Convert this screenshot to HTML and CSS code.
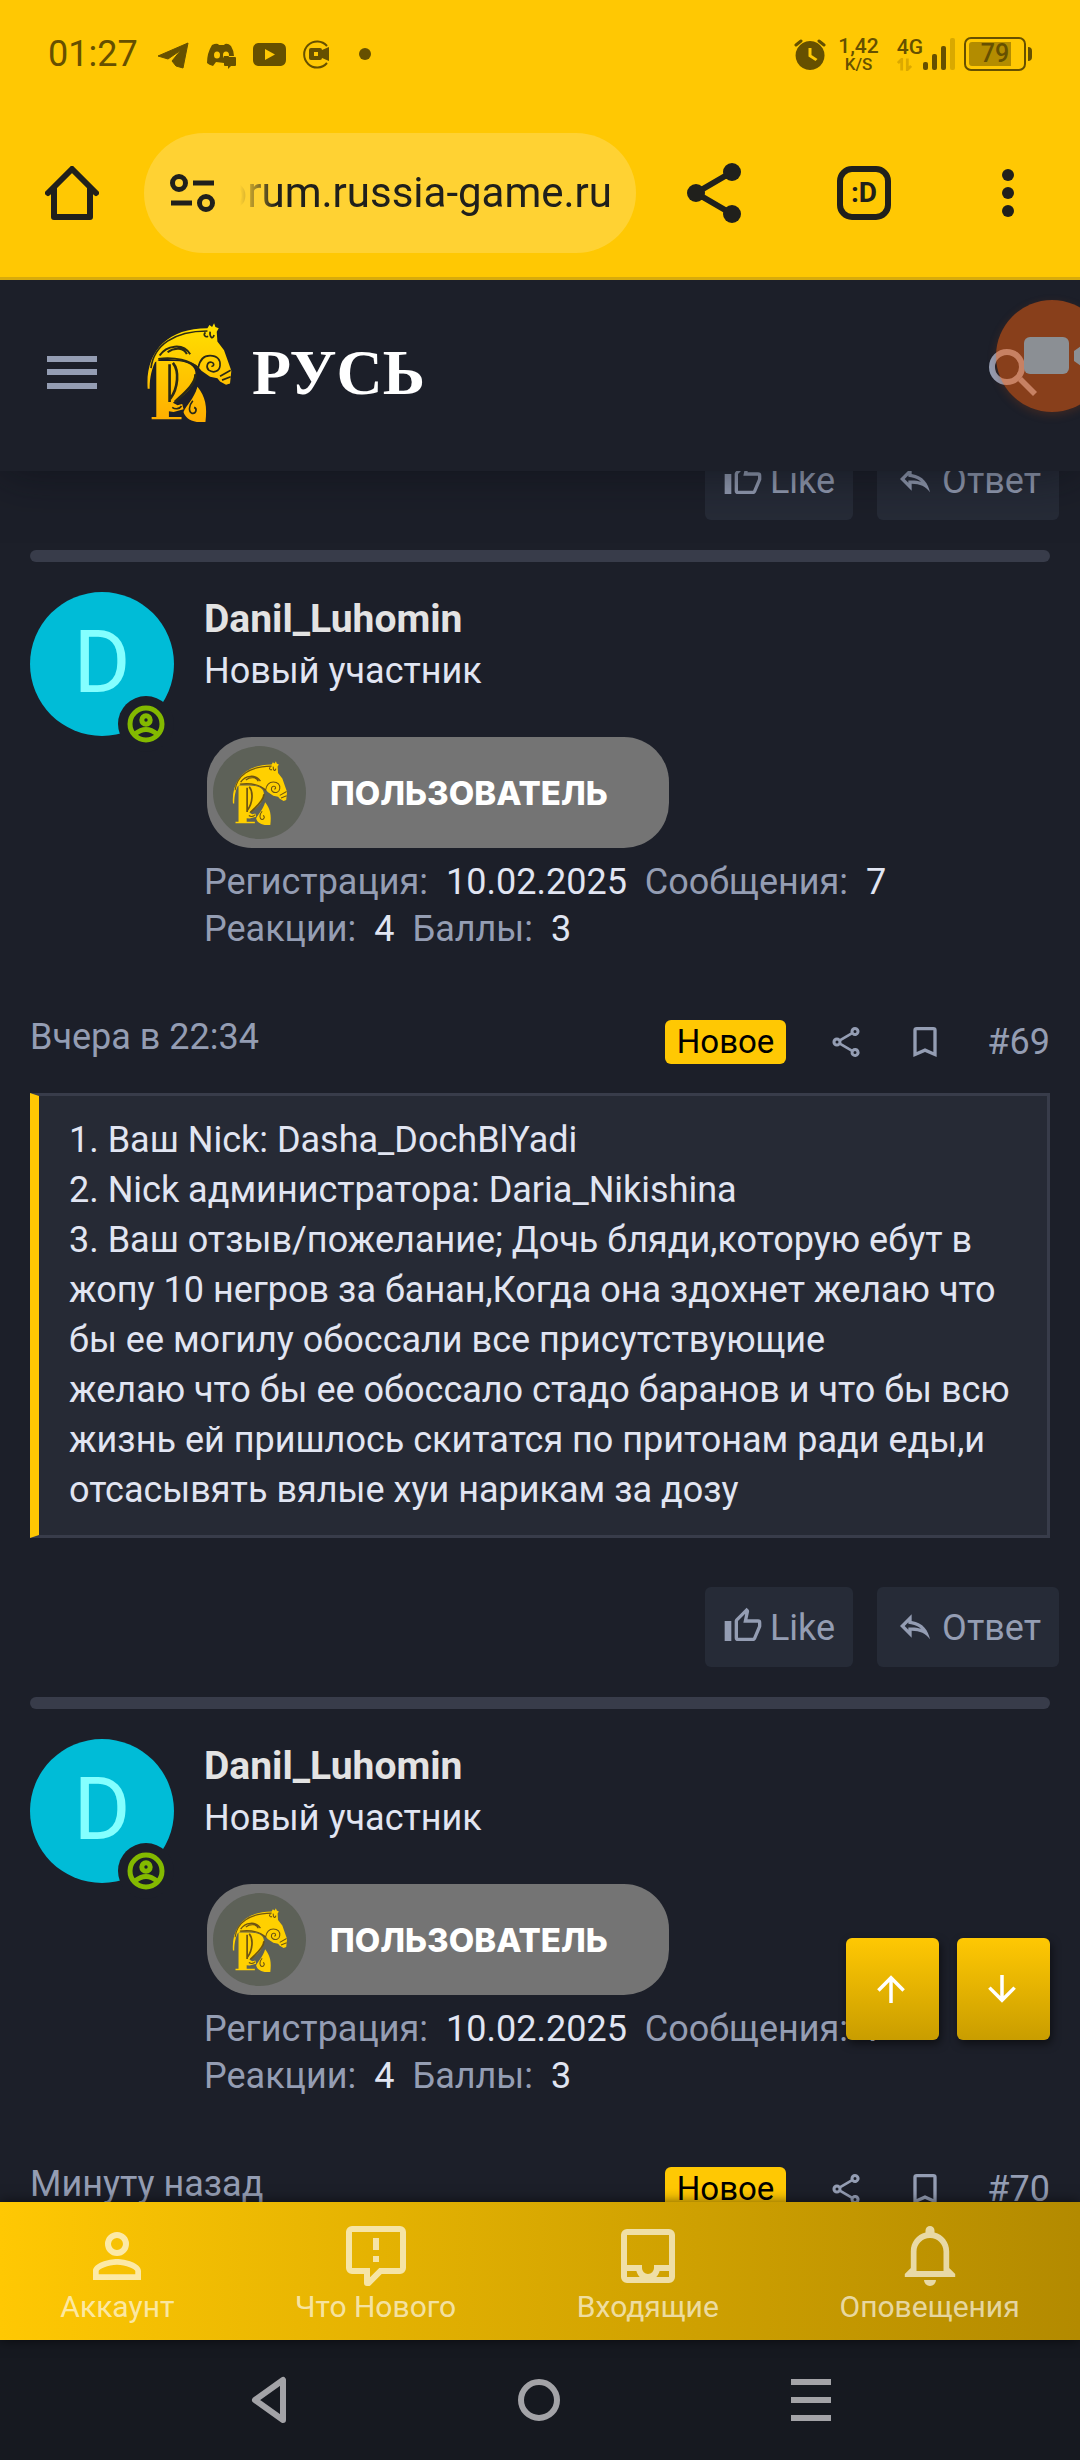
FILE: index.html
```html
<!DOCTYPE html>
<html lang="ru">
<head>
<meta charset="utf-8">
<meta name="viewport" content="width=device-width, initial-scale=1">
<title>forum.russia-game.ru</title>
<link rel="stylesheet" href="styles.css">
</head>
<body>
<svg class="defs" aria-hidden="true">
  <linearGradient id="gold" x1="0" y1="42" x2="0" y2="340" gradientUnits="userSpaceOnUse">
    <stop offset="0" stop-color="#ffe000"/><stop offset="1" stop-color="#ffae00"/>
  </linearGradient>
  <symbol id="horse" viewBox="50 42 256 298">
    <path d="M52 240C44 130 110 58 232 58L238 48 246 54 252 43 256 54 266 58 260 68 262 98 282 124 304 186 300 224 288 228 270 218 262 208 240 204 214 186 204 174C190 158 150 150 92 150L74 160C60 190 58 220 58 240z"/>
    <path d="M78 156h54c44 0 66 16 64 42-2 40-40 66-68 84l14 8 14-4 4 16-30 8-14-2v17h38v7H64v-7h14z"/>
    <path d="M202 234c24 30 30 60 24 106h-26c-24-4-36-16-40-30 8-20 30-36 42-76z"/>
    <g fill="none" stroke="currentColor" stroke-width="5">
      <path d="M62 178C70 110 130 66 232 66"/>
      <path d="M84 150c50-6 96 4 120 28M88 140c20-30 70-40 92-4M112 130c22-16 50-14 58 6" stroke-width="6"/>
      <path d="M118 166v114M128 162c20 24 16 76-8 108M196 196c2 30-40 62-62 84" stroke-width="8"/>
      <path d="M204 178c4-24 16-38 36-38 22 0 32 14 30 30-2 18-20 24-34 14-10-10-4-26 8-24 10 2 8 14 0 12M270 202l32-18M276 214l26-10"/>
      <path d="M226 70c-8 8 0 16 8 12M240 68c-2 16 8 26 12 10M188 276c-12 14-14 34-2 38 12 2 16-14 6-18M126 296c8 6 22 6 28-4"/>
    </g>
  </symbol>
  <symbol id="i-share" viewBox="0 0 24 24"><path d="M18 2a3 3 0 0 0-3 3c0 .2 0 .5.1.7L8 9.800A3 3 0 1 0 8 14.200l7.100 4.200a3 3 0 1 0 .9-1.600L8.900 12.700a3 3 0 0 0 0-1.400L16 7.200A3 3 0 1 0 18 2m0 2a1 1 0 1 1 0 2 1 1 0 0 1 0-2M6 11a1 1 0 1 1 0 2 1 1 0 0 1 0-2m12 7a1 1 0 1 1 0 2 1 1 0 0 1 0-2"/></symbol>
  <symbol id="i-bookmark" viewBox="0 0 24 24"><path d="M17 18l-5-2.180L7 18V5h10m0-2H7a2 2 0 0 0-2 2v16l7-3 7 3V5a2 2 0 0 0-2-2z"/></symbol>
  <symbol id="i-like" viewBox="0 0 24 24"><path d="M5 9v12H1V9h4m4 12a2 2 0 0 1-2-2V9c0-.55.22-1.050.59-1.410L14.170 1l1.060 1.060c.27.27.44.65.44 1.050l-.03.32L14.690 8H21a2 2 0 0 1 2 2v2c0 .26-.05.5-.14.73l-3.020 7.050C19.540 20.500 18.830 21 18 21H9m0-2h9.030L21 12v-2h-8.790l1.130-5.320L9 9.030V19z"/></symbol>
  <symbol id="i-reply" viewBox="0 0 24 24"><path d="M8 9.800v.9l1.700.3c2.600.4 4.500 1.400 5.900 2.700-1.700-.5-3.500-.8-5.600-.8H8v1.300L5.800 12 8 9.800M10 5l-7 7 7 7v-4.100c5 0 8.500 1.600 11 5.100-1-5-4-10-11-11V5z"/></symbol>
  <symbol id="i-online" viewBox="0 0 38 38"><g fill="none" stroke="currentColor" stroke-width="5"><circle cx="19" cy="19" r="16"/><circle cx="19" cy="15" r="4.200"/><path d="M8 29q11-9 22 0"/></g></symbol>
</svg>

<div class="screen">
  <div class="status">
    <span class="clock">01:27</span>
    <svg class="notices" viewBox="157 36 216 36" aria-hidden="true">
      <path d="M158 56L188 43 183 68 176 66 172 61 181 50 168 59z" stroke="currentColor" stroke-linejoin="round"/>
      <path fill-rule="evenodd" d="M212 45q4-2 6-1l1 1h5l1-1q3-1 6 2 3 5 3 10h-10v7l-8-1-3 4q-4-1-6-3 0-10 5-18zM214 55a3 3.500 0 1 0 6 0 3 3.500 0 1 0-6 0M223 55a3 3.500 0 1 0 6 0 3 3.500 0 1 0-6 0"/>
      <rect x="224" y="57" width="12" height="9" rx="1"/><path d="M228 65v4l4-4z"/>
      <path fill-rule="evenodd" d="M258 43h23q5 1 5 6v11q0 5-5 6h-23q-5-1-5-6V49q0-5 5-6m7 6v11l10-5.500z"/>
      <path d="M327 46A13 13 0 1 0 327 63" fill="none" stroke="currentColor" stroke-width="2"/>
      <path fill-rule="evenodd" d="M311 48h9q2 0 2 2l7-3v14l-7-3q0 2-2 2h-9q-2 0-2-2v-8q0-2 2-2m3 4v4h4v-4z"/>
      <circle cx="365" cy="54" r="6"/>
    </svg>
    <svg class="alarm" viewBox="0 0 32 32" aria-hidden="true">
      <path fill-rule="evenodd" d="M16 3a14.500 14.500 0 1 0 .1 0M14.500 10h3v7l6 4-2 2-7-4.500z"/>
      <path d="M2 7l5-4M25 3l5 4" stroke="currentColor" stroke-width="3" stroke-linecap="round"/>
    </svg>
    <span class="speed"><b>1,42</b><small>K/S</small></span>
    <span class="mobile"><b>4G</b>
      <svg viewBox="0 0 16 13" aria-hidden="true"><path d="M5 13V1L1 5M11 0v12l4-4" fill="none" stroke="currentColor" stroke-width="3"/></svg>
    </span>
    <svg class="bars" viewBox="0 0 32 32" aria-hidden="true"><rect y="24" width="5" height="8" rx="2"/><rect x="9" y="16" width="5" height="16" rx="2"/><rect x="18" y="8" width="5" height="24" rx="2"/><rect x="27" width="5" height="32" rx="2" fill="#d9a900"/></svg>
    <span class="battery"><span>79</span></span>
  </div>

  <div class="toolbar">
    <button class="tool" aria-label="Главная"><svg width="54" height="54" viewBox="0 0 54 54"><path d="M3 27L27 3 51 27M9 22v29h36V22" fill="none" stroke="currentColor" stroke-width="6" stroke-linecap="round" stroke-linejoin="round"/></svg></button>
    <label class="address">
      <svg width="45" height="38" viewBox="0 0 45 38" aria-hidden="true"><g fill="none" stroke="currentColor" stroke-width="5"><circle cx="9" cy="9" r="6.500"/><circle cx="36" cy="29" r="6.500"/><path d="M23 9h21M1 29h21"/></g></svg>
      <span class="address-clip"><input class="address-text" type="text" value="forum.russia-game.ru" aria-label="Адрес"></span>
    </label>
    <button class="tool tool-share" aria-label="Поделиться"><svg width="54" height="60" viewBox="0 0 54 60"><path d="M45 9L9 30l36 21" fill="none" stroke="currentColor" stroke-width="6"/><circle cx="45" cy="9" r="9"/><circle cx="9" cy="30" r="9"/><circle cx="45" cy="51" r="9"/></svg></button>
    <button class="tool tabs" aria-label="Вкладки">:D</button>
    <button class="tool" aria-label="Меню"><svg width="12" height="48" viewBox="0 0 12 48"><circle cx="6" cy="6" r="6"/><circle cx="6" cy="24" r="6"/><circle cx="6" cy="42" r="6"/></svg></button>
  </div>

  <header class="site">
    <button class="menu" aria-label="Меню форума"><svg width="50" height="33" viewBox="0 0 50 33"><path d="M0 0h50v6H0zM0 13h50v6H0zM0 27h50v6H0z"/></svg></button>
    <a class="logo" href="#"><svg class="logo-horse"><use href="#horse"/></svg><span class="wordmark">РУСЬ</span></a>
    <button class="search" aria-label="Поиск"><svg width="48" height="48" viewBox="0 0 48 48"><circle cx="18" cy="18" r="15" fill="none" stroke="currentColor" stroke-width="6"/><path d="M29 32l4-4 15 15-4 4z"/></svg></button>
  </header>

  <main class="feed">
    <div class="actions">
      <button class="action"><svg><use href="#i-like"/></svg>Like</button>
      <button class="action"><svg><use href="#i-reply"/></svg>Ответ</button>
    </div>

    <article class="post">
      <div class="user">
        <div class="avatar">D<span class="online"><svg><use href="#i-online"/></svg></span></div>
        <div class="about">
          <a class="name" href="#">Danil_Luhomin</a>
          <div class="rank">Новый участник</div>
          <div class="banner"><span class="crest"><svg><use href="#horse"/></svg></span>ПОЛЬЗОВАТЕЛЬ</div>
          <dl class="stats">
            <div><dt>Регистрация:</dt><dd>10.02.2025</dd></div>
            <div><dt>Сообщения:</dt><dd>7</dd></div>
            <div><dt>Реакции:</dt><dd>4</dd></div>
            <div><dt>Баллы:</dt><dd>3</dd></div>
          </dl>
        </div>
      </div>
      <div class="meta">
        <time>Вчера в 22:34</time>
        <div class="tools">
          <span class="new">Новое</span>
          <a href="#" aria-label="Поделиться"><svg class="ic-share"><use href="#i-share"/></svg></a>
          <a href="#" aria-label="Закладка"><svg class="ic-mark"><use href="#i-bookmark"/></svg></a>
          <a class="num" href="#">#69</a>
        </div>
      </div>
      <div class="message">1. Ваш Nick: Dasha_DochBlYadi<br>2. Nick администратора: Daria_Nikishina<br>3. Ваш отзыв/пожелание; Дочь бляди,которую ебут в жопу 10 негров за банан,Когда она здохнет желаю что бы ее могилу обоссали все присутствующие<br>желаю что бы ее обоссало стадо баранов и что бы всю жизнь ей пришлось скитатся по притонам ради еды,и отсасывять вялые хуи нарикам за дозу</div>
      <div class="actions">
        <button class="action"><svg><use href="#i-like"/></svg>Like</button>
        <button class="action"><svg><use href="#i-reply"/></svg>Ответ</button>
      </div>
    </article>

    <article class="post">
      <div class="user">
        <div class="avatar">D<span class="online"><svg><use href="#i-online"/></svg></span></div>
        <div class="about">
          <a class="name" href="#">Danil_Luhomin</a>
          <div class="rank">Новый участник</div>
          <div class="banner"><span class="crest"><svg><use href="#horse"/></svg></span>ПОЛЬЗОВАТЕЛЬ</div>
          <dl class="stats">
            <div><dt>Регистрация:</dt><dd>10.02.2025</dd></div>
            <div><dt>Сообщения:</dt><dd>7</dd></div>
            <div><dt>Реакции:</dt><dd>4</dd></div>
            <div><dt>Баллы:</dt><dd>3</dd></div>
          </dl>
        </div>
      </div>
      <div class="meta">
        <time>Минуту назад</time>
        <div class="tools">
          <span class="new">Новое</span>
          <a href="#" aria-label="Поделиться"><svg class="ic-share"><use href="#i-share"/></svg></a>
          <a href="#" aria-label="Закладка"><svg class="ic-mark"><use href="#i-bookmark"/></svg></a>
          <a class="num" href="#">#70</a>
        </div>
      </div>
    </article>
  </main>

  <nav class="tabbar">
    <div class="jump">
      <button aria-label="Вверх"><svg viewBox="0 0 24 24"><path d="M13 20h-2V8l-5.500 5.500-1.420-1.420L12 4.160l7.920 7.920-1.420 1.420L13 8v12z"/></svg></button>
      <button aria-label="Вниз"><svg viewBox="0 0 24 24"><path d="M11 4h2v12l5.500-5.500 1.420 1.420L12 19.840l-7.920-7.920L5.500 10.500 11 16V4z"/></svg></button>
    </div>
    <a href="#"><svg viewBox="0 0 24 24"><path d="M12 4a4 4 0 1 1 0 8 4 4 0 0 1 0-8m0 2a2 2 0 1 0 0 4 2 2 0 0 0 0-4m0 7c2.670 0 8 1.330 8 4v3H4v-3c0-2.670 5.330-4 8-4m0 1.900c-2.970 0-6.100 1.460-6.100 2.100v1.100h12.200V17c0-.64-3.130-2.100-6.100-2.100z"/></svg>Аккаунт</a>
    <a href="#"><svg viewBox="0 0 24 24"><path d="M13 10h-2V6h2v4m0 4h-2v-2h2v2M9 22a1 1 0 0 1-1-1v-3H4a2 2 0 0 1-2-2V4a2 2 0 0 1 2-2h16a2 2 0 0 1 2 2v12a2 2 0 0 1-2 2h-6.100l-3.700 3.710c-.2.18-.44.29-.7.29H9m1-6v3.080L13.080 16H20V4H4v12h6z"/></svg>Что Нового</a>
    <a href="#"><svg viewBox="0 0 24 24"><path d="M19 3H5a2 2 0 0 0-2 2v14a2 2 0 0 0 2 2h14a2 2 0 0 0 2-2V5a2 2 0 0 0-2-2M5 19v-2h3.130c.21.78.6 1.470 1.120 2H5m14 0h-4.250c.52-.53.91-1.220 1.120-2H19v2m0-4h-5v1a2 2 0 0 1-4 0v-1H5V5h14v10z"/></svg>Входящие</a>
    <a href="#"><svg viewBox="0 0 24 24"><path d="M10 20h4a2 2 0 0 1-4 0M12 2a1.500 1.500 0 0 0-1.500 1.500v.680C7.600 4.860 5.600 7.400 5.600 10.500V16l-2 2v1h16.800v-1l-2-2v-5.500c0-3.100-2-5.640-4.900-6.320V3.500A1.500 1.500 0 0 0 12 2m0 4c2.500 0 4.500 2 4.500 4.500V17h-9v-6.500C7.500 8 9.500 6 12 6z"/></svg>Оповещения</a>
  </nav>

  <div class="system">
    <button aria-label="Назад"><svg width="36" height="48" viewBox="0 0 36 48"><path d="M32 4v40L4 24z" fill="none" stroke="currentColor" stroke-width="6" stroke-linejoin="round"/></svg></button>
    <button aria-label="Домой"><svg width="42" height="42" viewBox="0 0 42 42"><circle cx="21" cy="21" r="18" fill="none" stroke="currentColor" stroke-width="6"/></svg></button>
    <button aria-label="Недавние"><svg width="40" height="42" viewBox="0 0 40 42"><path d="M0 0h40v6H0zM0 18h40v6H0zM0 36h40v6H0z"/></svg></button>
  </div>

  <div class="recorder"><svg width="76" height="40" viewBox="0 0 76 40" aria-hidden="true"><rect width="45" height="37" rx="6"/><path d="M50 14l14-10h6v30h-6L50 24z"/></svg></div>
</div>
</body>
</html>
```
FILE: styles.css
```css
:root {
  --yellow: #ffc803;
  --bg: #1c1f29;
  --panel: #262a35;
  --line: #383c4a;
  --muted: #949db3;
  --text: #e1e5f2;
}

* { box-sizing: border-box; }

body {
  margin: 0;
  background: var(--bg);
  color: var(--text);
  font-family: Roboto, "Noto Sans", sans-serif;
  font-size: 36px;
}

svg { display: block; flex: none; fill: currentColor; }
.defs { position: absolute; width: 0; height: 0; }
a { color: inherit; text-decoration: none; }
button { flex: none; padding: 0; border: 0; background: none; color: inherit; font: inherit; }

.screen {
  position: relative;
  display: flex;
  flex-direction: column;
  height: 100vh;
  overflow: hidden;
}

/* Phone status bar */
.status {
  position: relative;
  z-index: 2;
  display: flex;
  align-items: center;
  height: 108px;
  padding: 0 54px 0 48px;
  background: var(--yellow);
  color: #665000;
}
.clock { width: 109px; }
.notices { width: 216px; height: 36px; margin-right: auto; }
.alarm { width: 32px; height: 32px; margin-right: 12px; }
.speed { display: flex; flex-direction: column; align-items: center; margin-right: 18px; }
.speed b, .mobile b { font-size: 21px; line-height: 20px; font-weight: 500; }
.speed small { font-size: 17px; line-height: 16px; font-weight: 500; }
.mobile { display: flex; flex-direction: column; gap: 1px; }
.mobile svg { width: 15px; height: 13px; color: #dca900; }
.bars { width: 32px; height: 32px; margin-right: 9px; }
.battery {
  position: relative;
  width: 62px;
  height: 34px;
  padding: 3px;
  border: 2px solid currentColor;
  border-radius: 7px;
  font-size: 25px;
  line-height: 24px;
  font-weight: 500;
  text-align: center;
}
.battery span {
  display: block;
  background: linear-gradient(90deg, #b38c00 42px, transparent 42px);
  border-radius: 3px;
}
.battery::after {
  content: "";
  position: absolute;
  right: -8px;
  top: 8px;
  width: 4px;
  height: 14px;
  border-radius: 0 4px 4px 0;
  background: currentColor;
}

/* Browser toolbar */
.toolbar {
  position: relative;
  z-index: 2;
  display: flex;
  align-items: center;
  height: 172px;
  padding: 0 66px 0 45px;
  border-bottom: 3px solid #d8ab0c;
  background: var(--yellow);
  color: #20201c;
}
.address {
  flex: 1;
  display: flex;
  align-items: center;
  gap: 25px;
  min-width: 0;
  height: 120px;
  margin: 0 51px 0 45px;
  padding: 0 24px 0 26px;
  border-radius: 60px;
  background: #ffd233;
}
.address-clip {
  flex: 1;
  display: flex;
  justify-content: flex-end;
  min-width: 0;
  overflow: hidden;
  -webkit-mask-image: linear-gradient(90deg, transparent, #000 36px);
  mask-image: linear-gradient(90deg, transparent, #000 36px);
}
.address-text {
  flex: none;
  width: 480px;
  padding: 0;
  border: 0;
  background: none;
  color: inherit;
  font-family: Roboto, sans-serif;
  font-size: 42px;
  text-align: right;
}
.tool-share { margin-right: 96px; }
.tabs {
  width: 54px;
  height: 54px;
  margin-right: 111px;
  border: 6px solid currentColor;
  border-radius: 15px;
  font-size: 28px;
  line-height: 40px;
  font-weight: 700;
}

/* Forum header */
.site {
  position: relative;
  z-index: 1;
  display: flex;
  align-items: center;
  height: 191px;
  padding: 0 43px 6px 47px;
  background: var(--bg);
  box-shadow: 0 0 48px rgba(10, 12, 20, 0.6);
  color: var(--muted);
}
.logo { display: flex; align-items: center; gap: 20px; margin: 0 auto 0 50px; }
.logo-horse { width: 85px; height: 99px; fill: url(#gold); color: #2b2a16; }
.wordmark {
  color: #fff;
  font: 700 64px/99px "Liberation Serif", serif;
}

/* Posts */
.feed {
  flex: 1;
  min-height: 0;
  margin-top: -31px;
  padding: 0 30px;
  overflow: hidden;
}
.post::before {
  content: "";
  display: block;
  height: 12px;
  margin: 30px 0;
  border-radius: 6px;
  background: var(--line);
}
.user { display: flex; gap: 30px; }
.avatar {
  position: relative;
  width: 144px;
  height: 144px;
  border-radius: 50%;
  background: #00bcd7;
  color: #84ffff;
  font-size: 87px;
  line-height: 140px;
  text-align: center;
}
.online {
  position: absolute;
  right: 0;
  bottom: -16px;
  padding: 9px;
  border-radius: 50%;
  background: var(--bg);
  color: #83b900;
}
.online svg { width: 38px; height: 38px; }
.about { flex: 1; }
.name { display: block; color: #e3e3e3; font-size: 39px; line-height: 54px; font-weight: 700; }
.rank { line-height: 50px; }
.banner {
  display: flex;
  align-items: center;
  gap: 24px;
  width: 462px;
  height: 111px;
  margin: 41px 0 11px 3px;
  padding: 0 6px;
  border-radius: 45px;
  background: #747474;
  color: #fff;
  font: 800 33px/48px Inter, sans-serif;
}
.crest {
  display: grid;
  place-items: center;
  width: 93px;
  height: 93px;
  border-radius: 50%;
  background: #5d6158;
}
.crest svg { width: 58px; height: 64px; fill: #ffd000; color: #6e5412; }
.stats { display: flex; flex-wrap: wrap; column-gap: 18px; width: 720px; margin: 0; line-height: 47px; }
.stats div { display: flex; gap: 18px; }
.stats dt { color: var(--muted); }
.stats dd { margin: 0; }

.meta { display: flex; justify-content: space-between; margin: 63px 0 26px; color: var(--muted); }
.meta time { line-height: 42px; }
.tools { display: flex; align-items: center; height: 51px; }
.new {
  margin-right: 42px;
  padding: 0 12px;
  border-radius: 6px;
  background: var(--yellow);
  color: #000;
  font-size: 33px;
  line-height: 44px;
}
.ic-share { width: 36px; height: 36px; margin-right: 41px; }
.ic-mark { width: 40px; height: 40px; margin-right: 42px; }

.message {
  padding: 19px 27px 20px 30px;
  border: 3px solid var(--line);
  border-left: 9px solid var(--yellow);
  background: var(--panel);
  line-height: 50px;
}
.actions { display: flex; justify-content: flex-end; gap: 24px; margin-right: -9px; }
.post .actions { margin-top: 49px; }
.action {
  display: flex;
  align-items: center;
  gap: 7px;
  height: 80px;
  padding: 2px 18px 0;
  border-radius: 6px;
  background: #262b37;
  color: var(--muted);
}
.action svg { width: 40px; height: 40px; margin-bottom: 4px; }

/* Bottom tabs */
.tabbar {
  position: relative;
  display: flex;
  justify-content: space-around;
  height: 138px;
  padding-top: 18px;
  background: linear-gradient(90deg, #ffc803, #b38a00);
  box-shadow: 0 0 12px rgba(0, 0, 0, 0.6);
  color: rgba(255, 255, 255, 0.65);
  font-size: 30px;
  line-height: 30px;
}
.tabbar a { display: flex; flex-direction: column; align-items: center; }
.tabbar a svg { width: 72px; height: 72px; }
.jump {
  position: absolute;
  right: 30px;
  bottom: 300px;
  display: flex;
  gap: 18px;
  color: #fff;
}
.jump button {
  display: grid;
  place-items: center;
  width: 93px;
  height: 102px;
  padding-right: 4px;
  border-radius: 6px;
  background: linear-gradient(#ffc803, #c99d00);
  box-shadow: 2px 4px 8px rgba(0, 0, 0, 0.5);
}
.jump svg { width: 42px; height: 42px; }

/* Phone navigation */
.system {
  display: flex;
  justify-content: space-between;
  align-items: center;
  height: 120px;
  padding: 0 249px 0 251px;
  background: #161920;
  color: #a3a3a7;
}

/* Floating screen recorder bubble */
.recorder {
  position: absolute;
  z-index: 2;
  top: 300px;
  right: -28px;
  width: 112px;
  height: 112px;
  padding: 37px 0 0 28px;
  border-radius: 50%;
  background: rgba(255, 99, 13, 0.48);
  box-shadow: 0 3px 8px rgba(139, 63, 28, 0.3);
  color: #8b8f94;
}
```
